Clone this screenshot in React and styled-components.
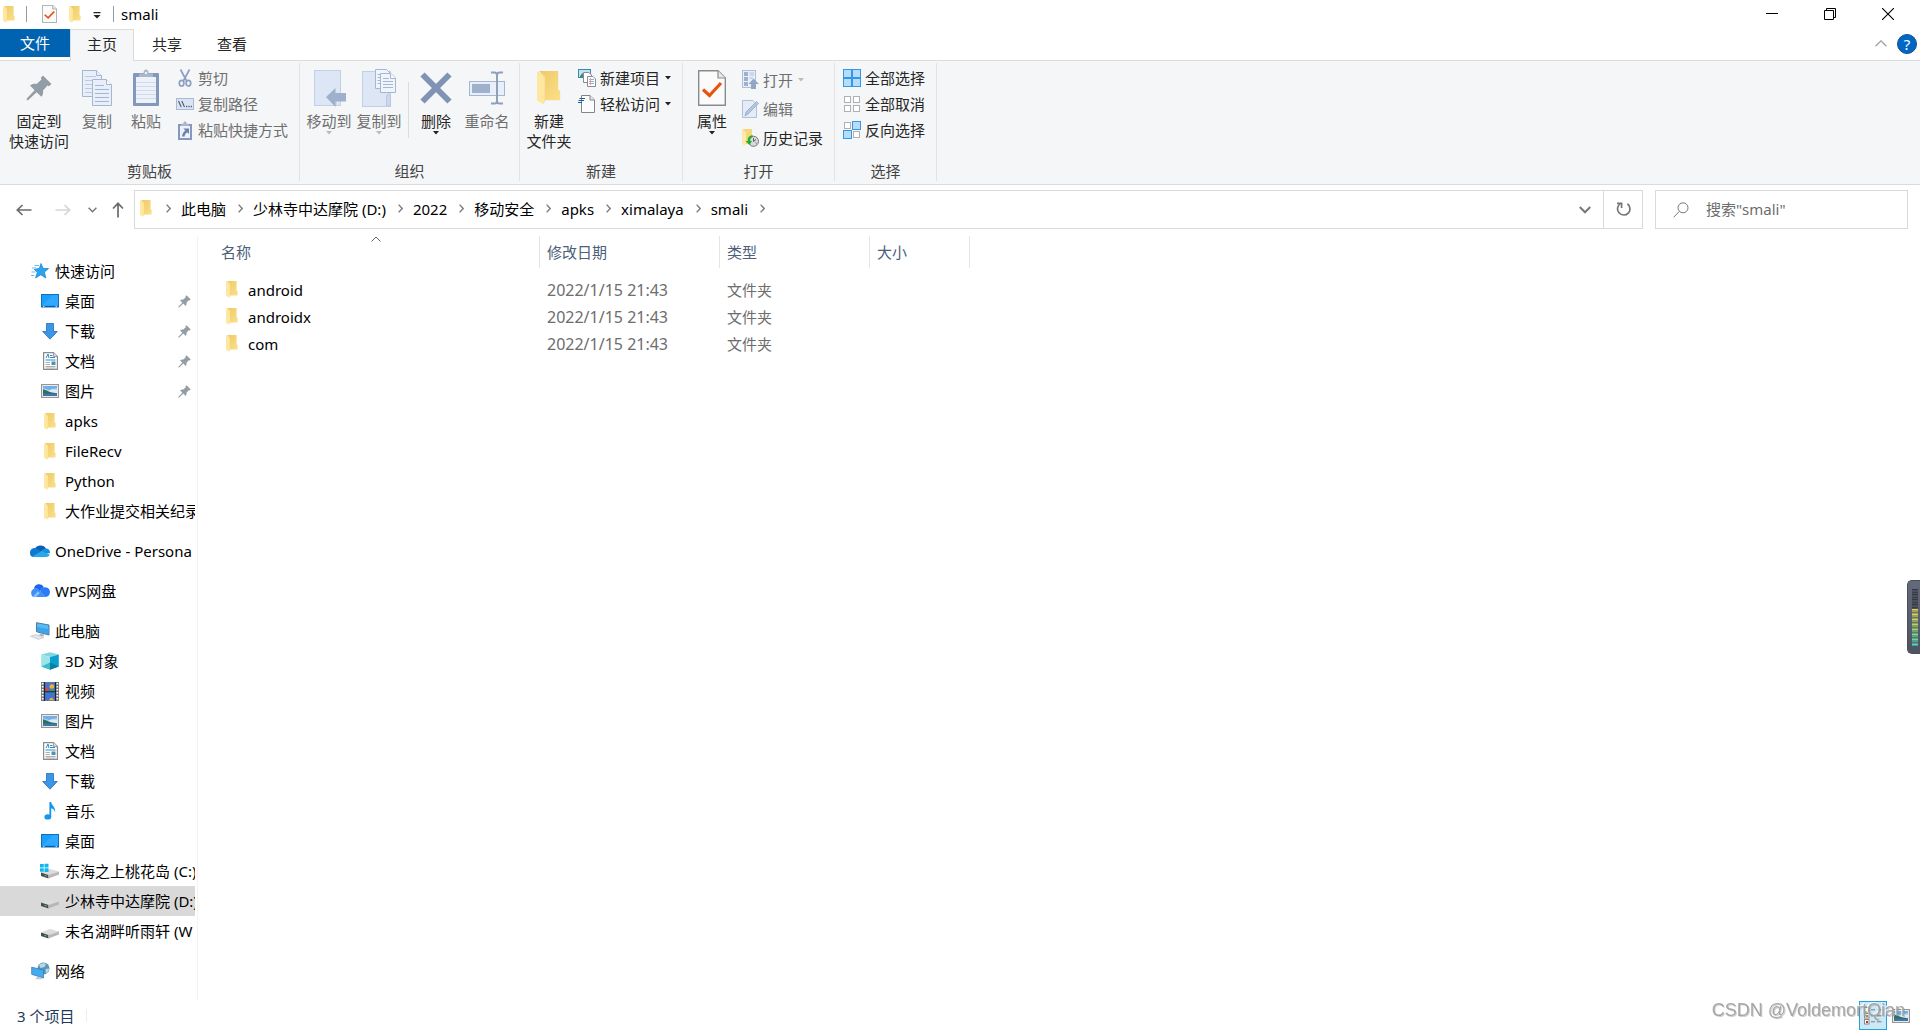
import React, { useState } from 'react';
import styled, { createGlobalStyle } from 'styled-components';

const GlobalStyle = createGlobalStyle`
  * {
    box-sizing: border-box;
  }

  body {
    margin: 0;
    background: #fff;
    color: #000;
    font-family: "Noto Sans", "Noto Sans CJK SC", sans-serif;
    font-size: 15px;
    line-height: 20px;
  }

  button, input {
    font: inherit;
    color: inherit;
  }

  button {
    border: none;
    background: none;
    padding: 0;
    white-space: nowrap;
  }

  svg {
    display: block;
    flex: none;
  }
`;

/* ---------- layout ---------- */

const Window = styled.div`
  display: flex;
  flex-direction: column;
  min-height: 100vh;
  overflow: hidden;
`;

const TitleBar = styled.header`
  display: flex;
  align-items: center;
  height: 29px;
  padding: 0 3px 1px;
`;

const QuickTools = styled.div`
  display: flex;
  align-items: center;
`;

const QuickButton = styled.button`
  display: flex;
  justify-content: center;
  width: ${props => props.$narrow ? '18px' : '26px'};
`;

const TitleDivider = styled.span`
  width: 1px;
  height: 16px;
  margin: 0 ${props => props.$after} 0 ${props => props.$before};
  background: #9b9b9b;
`;

const WindowTitle = styled.h1`
  margin: 0;
  font-size: 15px;
  font-weight: 400;
  line-height: 20px;
`;

const WindowControls = styled.div`
  display: flex;
  margin-left: auto;
`;

const ControlButton = styled.button`
  display: flex;
  align-items: center;
  justify-content: center;
  width: 58px;
  height: 28px;

  &:hover {
    background: #e5e5e5;
  }
`;

const TabBar = styled.nav`
  display: flex;
  height: 31px;
  padding-right: 3px;
`;

const FileTab = styled.button`
  width: 70px;
  height: 28px;
  background: #0063b1;
  color: #fff;
`;

const Tab = styled.button`
  height: 32px;
  margin-right: 1px;
  padding: 0 16px 3px;
  border: 1px solid ${props => props.$active ? '#dadbdc' : 'transparent'};
  border-bottom: none;
  background: ${props => props.$active ? '#f5f6f7' : 'transparent'};
  color: #262626;
  z-index: 1;
`;

const TabTools = styled.div`
  display: flex;
  align-items: center;
  gap: 10px;
  margin-left: auto;
  padding-bottom: 2px;
`;

const Ribbon = styled.section`
  display: flex;
  height: 125px;
  border-top: 1px solid #dadbdc;
  border-bottom: 1px solid #dadbdc;
  background: #f5f6f7;
`;

const Group = styled.div`
  display: flex;
  flex-direction: column;
  justify-content: space-between;
  margin: 2px 0 3px;
  padding: 0 4px;
  border-right: 1px solid #e2e3e4;
`;

const GroupContent = styled.div`
  display: flex;
`;

const GroupLabel = styled.div`
  color: #444;
  text-align: center;
`;

const InnerDivider = styled.span`
  width: 1px;
  height: 56px;
  margin: 19px 4px 0;
  background: #dcdddf;
`;

const BigButton = styled.button`
  display: flex;
  flex-direction: column;
  align-items: center;
  align-self: flex-start;
  width: ${props => props.$width || '50px'};
  margin-top: 6px;
  color: ${props => props.disabled ? '#6f6f6f' : '#262626'};
`;

const BigIcon = styled.span`
  display: flex;
  align-items: center;
  height: 38px;
  margin-bottom: 4px;
`;

const SmallColumn = styled.div`
  display: flex;
  flex-direction: column;
  padding: 2px 7px 0 3px;
`;

const SmallButton = styled.button`
  display: flex;
  align-items: center;
  height: ${props => props.$tall ? '29px' : '26px'};
  color: ${props => props.disabled ? '#6f6f6f' : '#262626'};
`;

const SmallIcon = styled.span`
  display: flex;
  justify-content: center;
  width: 20px;
  margin-right: 3px;
`;

const SmallArrow = styled.span`
  margin-left: 5px;
`;

const AddressRow = styled.div`
  display: flex;
  align-items: stretch;
  height: 51px;
  padding: 5px 12px 7px 4px;
`;

const NavButton = styled.button`
  display: flex;
  align-items: center;
  justify-content: center;
  width: ${props => props.$width};
`;

const AddressBox = styled.div`
  display: flex;
  flex: 1;
  align-items: stretch;
  min-width: 0;
  margin: 0 12px 0 2px;
  border: 1px solid #d9d9d9;
`;

const Breadcrumbs = styled.nav`
  display: flex;
  flex: 1;
  align-items: center;
  min-width: 0;
  padding: 0 0 2px 5px;
`;

const CrumbFolder = styled.span`
  width: 14px;
`;

const CrumbChevron = styled.span`
  margin: 0 10px 0 12px;
`;

const Crumb = styled.a`
  color: #000;
  text-decoration: none;
  white-space: nowrap;
`;

const RefreshButton = styled(NavButton)`
  border-left: 1px solid #d9d9d9;
`;

const SearchBox = styled.label`
  display: flex;
  align-items: center;
  width: 253px;
  padding-left: 17px;
  border: 1px solid #d9d9d9;
`;

const SearchInput = styled.input`
  flex: 1;
  min-width: 0;
  margin-left: 17px;
  padding: 0 0 2px;
  border: none;
  outline: none;
  background: none;

  &::placeholder {
    color: #6d6d6d;
    opacity: 1;
  }
`;

const Body = styled.main`
  display: flex;
  flex: 1;
`;

const Sidebar = styled.aside`
  width: 198px;
  padding: 20px 2px 5px 0;
  border-right: 1px solid #f3f3f3;
`;

const TreeSection = styled.div`
  margin-bottom: 10px;
`;

const TreeRow = styled.a`
  display: flex;
  align-items: center;
  height: 30px;
  padding-left: ${props => props.$child ? '40px' : '30px'};
  overflow: hidden;
  background: ${props => props.$selected ? '#d9d9d9' : 'transparent'};
  color: #000;
  text-decoration: none;
  white-space: nowrap;

  &:hover {
    background: ${props => props.$selected ? '#d9d9d9' : '#e5f3ff'};
  }
`;

const TreeIcon = styled.span`
  display: flex;
  flex: none;
  justify-content: center;
  width: 20px;
  margin-right: 5px;
`;

const TreeLabel = styled.span`
  flex: 1;
  overflow: hidden;
`;

const TreePin = styled.span`
  margin-right: 4px;
`;

const Content = styled.section`
  flex: 1;
  min-width: 0;
  padding-left: 14px;
`;

const FileTable = styled.table`
  width: 758px;
  table-layout: fixed;
  border-collapse: separate;
  border-spacing: 0;

  tbody::before {
    content: '';
    display: block;
    height: 8px;
  }
`;

const HeadCell = styled.th`
  position: relative;
  width: ${props => props.$width};
  height: 32px;
  padding: 0 0 0 ${props => props.$first ? '9px' : '7px'};
  border-right: 1px solid #e5e5e5;
  color: #4c607a;
  font-weight: 400;
  text-align: left;
`;

const SortMark = styled.span`
  position: absolute;
  top: 0;
  left: 50%;
  transform: translateX(-50%);
`;

const Cell = styled.td`
  height: 27px;
  padding: 0 0 0 7px;
  color: #6d6d6d;
`;

const NameCell = styled(Cell)`
  padding-left: 14px;
  color: #000;
`;

const DateCell = styled(Cell)`
  font-size: 16px;
`;

const FileName = styled.div`
  display: flex;
  align-items: center;
  gap: 10px;
`;

const StatusBar = styled.footer`
  display: flex;
  align-items: center;
  height: 29px;
  padding: 0 9px 0 17px;
  color: #1e395b;
`;

const StatusDivider = styled.span`
  width: 1px;
  height: 13px;
  margin-left: 12px;
  background: #ececec;
`;

const ViewSwitch = styled.div`
  display: flex;
  gap: 4px;
  margin-left: auto;
`;

const ViewButton = styled.button`
  display: flex;
  align-items: center;
  justify-content: center;
  width: ${props => props.$active ? '28px' : '20px'};
  height: 29px;
  border: 1px solid ${props => props.$active ? '#26a0da' : 'transparent'};
  background: ${props => props.$active ? '#cbe8f6' : 'transparent'};
`;

const Watermark = styled.div`
  position: fixed;
  right: 15px;
  bottom: 10px;
  color: rgba(160, 160, 160, 0.9);
  font-family: "Liberation Sans", sans-serif;
  font-size: 18px;
  text-shadow: 1px 1px 0 rgba(120, 120, 120, 0.35), -1px -1px 0 rgba(255, 255, 255, 0.8);
  pointer-events: none;
`;

const LevelMeter = styled.div`
  position: fixed;
  top: 580px;
  right: 0;
  width: 13px;
  height: 74px;
  padding: 8px 2px 8px 4px;
  border: 1px solid #4b4f5a;
  border-right: none;
  border-radius: 5px 0 0 5px;
  background: linear-gradient(#646a7b, #4d5360);
`;

/* ---------- icons ---------- */

const FolderIcon = ({ size = 12 }) => (
  <svg width={size} height={size / 12 * 17} viewBox="0 0 12 17">
    <defs>
      <linearGradient id="folderBack" x1="0" y1="0" x2="1" y2="1">
        <stop offset="0" stopColor="#edc965" />
        <stop offset="1" stopColor="#fbe08a" />
      </linearGradient>
    </defs>
    <path d="M1 0H10.6V9.4L11.6 10V14.6H3V2Z" fill="url(#folderBack)" />
    <path d="M0 0.4L4 2.8V14.4L3.2 16.8L0 14.8Z" fill="#ffe7a0" />
    <path d="M0.2 0.5L4 2.8V14.4L3.6 15.6" fill="none" stroke="#f3d88a" strokeWidth="0.4" />
  </svg>
);

const PropertiesIcon = ({ width = 15, height = 18 }) => (
  <svg width={width} height={height} viewBox="0 0 28 36" preserveAspectRatio="none">
    <path d="M0.7 0.7H20L27.3 8V35.3H0.7Z" fill="#fbfbfb" stroke="#8b8b8b" strokeWidth="1.4" />
    <path d="M20 0.7V8H27.3" fill="#e8e8e8" stroke="#8b8b8b" strokeWidth="1.2" />
    <path d="M5 19.5L11.5 25.5L23 13" fill="none" stroke="#e8530e" strokeWidth="3.2" />
  </svg>
);

const CustomizeIcon = () => (
  <svg width="8" height="9" viewBox="0 0 8 9">
    <path d="M0.5 2H7.5V3.2H0.5Z M0.5 5H7.5L4 8.5Z" fill="#222" />
  </svg>
);

const MinimizeIcon = () => (
  <svg width="12" height="12" viewBox="0 0 12 12">
    <path d="M0 5.5H12" stroke="#000" />
  </svg>
);

const RestoreIcon = () => (
  <svg width="12" height="12" viewBox="0 0 12 12" fill="none" stroke="#000">
    <path d="M0.5 2.5H9.5V11.5H0.5Z M2.5 2.5V0.5H11.5V9.5H9.5" />
  </svg>
);

const CloseIcon = () => (
  <svg width="12" height="12" viewBox="0 0 12 12">
    <path d="M0 0L12 12M12 0L0 12" stroke="#000" strokeWidth="1.1" />
  </svg>
);

const CollapseIcon = () => (
  <svg width="12" height="7" viewBox="0 0 12 7">
    <path d="M0.5 6.3L6 0.9L11.5 6.3" fill="none" stroke="#a0a0a0" strokeWidth="1.3" />
  </svg>
);

const HelpBadge = styled.button`
  display: flex;
  align-items: center;
  justify-content: center;
  width: 20px;
  height: 20px;
  border: 1px solid #1a4f85;
  border-radius: 50%;
  background: #0067c5;
  color: #fff;
  font-size: 15px;
  line-height: 18px;
`;

const DownArrow = ({ muted }) => (
  <svg width="6" height="4" viewBox="0 0 6 4">
    <path d="M0 0H6L3 3.4Z" fill={muted ? '#b9bcc0' : '#222'} />
  </svg>
);

const PinIcon = ({ size = 13 }) => (
  <svg width={size} height={size} viewBox="0 0 26 26">
    <path
      d="M17 0.5L25.5 9L23 11.2L21.4 10.6L17 15.5C17.4 18 17 20 15.4 21.8L10.6 17.2L1.8 25.5L0.3 24L8.6 15.3L4 10.6C6 8.9 8.2 8.6 10.6 9L15.5 4.6L14.8 2.8Z"
      fill="#939da5"
    />
  </svg>
);

const CopyIcon = () => (
  <svg width="30" height="36" viewBox="0 0 30 36" fill="#e9effa" stroke="#a5b6d1">
    <path d="M0.5 0.5H14.5L19.5 5.5V26.5H0.5Z" />
    <path d="M3 6.5H14M3 10.5H14M3 14.5H14M3 18.5H14M3 22.5H14" stroke="#bccae0" />
    <path d="M14.5 0.5V5.5H19.5" />
    <path d="M10.5 9.5H24.5L29.5 14.5V35.5H10.5Z" />
    <path d="M24.5 9.5V14.5H29.5" fill="#fff" />
    <path d="M13 15.5H22M13 19.5H27M13 23.5H27M13 27.5H27M13 31.5H27" stroke="#a5b6d1" />
  </svg>
);

const PasteIcon = () => (
  <svg width="26" height="38" viewBox="0 0 26 38">
    <rect y="4" width="26" height="33" rx="1" fill="#8497bd" />
    <rect x="3" y="8" width="20" height="26" fill="#ecf1fa" />
    <path d="M3 13.5H23M3 17.5H23M3 21.5H23M3 25.5H23M3 29.5H23" stroke="#d0daeb" />
    <path d="M6 8V4.5H10.5C10.5 1.5 11.5 0.5 13 0.5S15.5 1.5 15.5 4.5H20V8Z" fill="#a9b6cb" />
    <circle cx="13" cy="4" r="1.2" fill="#eef2f8" />
  </svg>
);

const ScissorsIcon = () => (
  <svg width="14" height="18" viewBox="0 0 14 18" fill="none" stroke="#8d9fc0">
    <path d="M2.5 0.5L8.7 12M11.5 0.5L5.3 12" strokeWidth="1.7" />
    <ellipse cx="3.6" cy="14.2" rx="2.3" ry="2.8" strokeWidth="1.7" />
    <ellipse cx="10.4" cy="14.2" rx="2.3" ry="2.8" strokeWidth="1.7" />
  </svg>
);

const CopyPathIcon = () => (
  <svg width="18" height="12" viewBox="0 0 18 12">
    <rect x="0.5" y="0.5" width="17" height="11" fill="#dbe4f2" stroke="#a9b9d3" />
    <path d="M2.5 3L5.2 9M5.8 3L8.5 9" stroke="#4d5b78" strokeWidth="1.1" />
    <path d="M10 8.5h1.2M12.4 8.5h1.2M14.8 8.5h1.2" stroke="#4d5b78" strokeWidth="1.3" />
  </svg>
);

const PasteShortcutIcon = () => (
  <svg width="14" height="19" viewBox="0 0 14 19">
    <rect y="3" width="14" height="16" fill="#8699bd" />
    <rect x="2" y="5" width="10" height="12" fill="#edf2fa" />
    <path d="M3 5V2.8H5.4C5.4 1 6 0.4 7 0.4S8.6 1 8.6 2.8H11V5Z" fill="#a9b6cb" />
    <path d="M5.4 7.5H11V13L9.2 11.2C7.6 12.4 6.8 13.6 6.6 15.4H4C4.2 12.8 5.3 11 7.3 9.4Z" fill="#6c82ad" />
  </svg>
);

const MoveToIcon = () => (
  <svg width="34" height="38" viewBox="-2 -1 34 38">
    <rect x="0.5" y="0.5" width="26" height="35" fill="#dce6f4" stroke="#c2d0e5" />
    <path d="M22 25V36" stroke="#c2d0e5" />
    <path d="M12 27L21.5 18V23H32V31.5H21.5V37Z" fill="#9fb0cc" />
  </svg>
);

const CopyToIcon = () => (
  <svg width="34" height="38" viewBox="0 0 34 38">
    <rect x="0.5" y="2.5" width="28" height="35" fill="#dce6f4" stroke="#c2d0e5" />
    <path d="M24.5 37V27L26.5 24.5L28.5 27V37Z" fill="#cbd8ea" stroke="#b9c8df" />
    <g fill="#f0f4fb" stroke="#a5b6d1">
      <path d="M13.5 0.5H24.5L28.5 4.5V19.5H13.5Z" />
      <path d="M15.5 5.5H19M15.5 8.5H19M15.5 11.5H19M15.5 14.5H19" />
      <path d="M18.5 4.5H29L33.5 9V23.5H18.5Z" />
      <path d="M28.5 4.5V9.5H33.5" fill="#fff" />
      <path d="M21 9.5H27M21 12.5H31M21 15.5H31M21 18.5H31" />
    </g>
  </svg>
);

const DeleteIcon = () => (
  <svg width="32" height="32" viewBox="0 0 32 32">
    <path d="M2.5 2.5L29.5 29.5M29.5 2.5L2.5 29.5" stroke="#8093b5" strokeWidth="6" />
  </svg>
);

const RenameIcon = () => (
  <svg width="36" height="34" viewBox="0 0 36 34">
    <rect x="0.5" y="10.5" width="35" height="14" fill="#e9effa" stroke="#a5b6d1" />
    <rect x="3" y="13" width="18" height="9" fill="#9fb0cc" />
    <path
      d="M22 1.5H25.5Q28 1.5 28 4Q28 1.5 30.5 1.5H34M28 3V31M22 32.5H25.5Q28 32.5 28 30Q28 32.5 30.5 32.5H34"
      fill="none"
      stroke="#8fa0bf"
      strokeWidth="2"
    />
  </svg>
);

const NewItemIcon = () => (
  <svg width="18" height="18" viewBox="0 0 18 18">
    <rect x="0.5" y="0.5" width="12" height="8" fill="#bfe3f5" stroke="#3b87b0" />
    <path d="M2 7L4.5 4L6 5.5L9 3V8H2Z" fill="#3e8c6a" />
    <path d="M5.5 3.5H11L13.5 6V13.5H5.5Z" fill="#fff" stroke="#8b8b8b" />
    <path d="M9.5 7.5H15L17.5 10V17.5H9.5Z" fill="#fff" stroke="#8b8b8b" />
    <path d="M11 10.5H16M11 12.5H16M11 14.5H16" stroke="#8bb4dd" />
    <path d="M12.5 9V16" stroke="#e59a9a" />
  </svg>
);

const EasyAccessIcon = () => (
  <svg width="18" height="18" viewBox="0 0 18 18">
    <path d="M3.5 0.5H12L16.5 5V17.5H3.5Z" fill="#fcfcfc" stroke="#858585" />
    <path d="M12 0.5V5H16.5" fill="#e9e9e9" stroke="#858585" />
    <path d="M1.5 3.5H7M0.5 5.5H6M0 7.5H4" stroke="#1464a5" strokeWidth="1.2" />
  </svg>
);

const OpenIcon = () => (
  <svg width="17" height="19" viewBox="0 0 17 19">
    <rect x="0.5" y="0.5" width="13" height="17" fill="#e9effa" stroke="#b0bfd8" />
    <path d="M2 2H6V6H2ZM2 7H6V11H2ZM2 12H6V16H2Z" fill="#a0b1ce" />
    <path d="M7.5 3H12M7.5 5H12M7.5 8H11" stroke="#b0bfd8" />
    <path d="M11.5 8.5L17 14H14V19H9V14H6.5Z" fill="#93a5c5" />
  </svg>
);

const EditIcon = () => (
  <svg width="17" height="18" viewBox="0 0 17 18">
    <path d="M0.5 0.5H11L14.5 4V17.5H0.5Z" fill="#e4ecf8" stroke="#b0bfd8" />
    <path d="M3 16L4 12L14.5 1.5L16.5 3.5L6 14Z" fill="#b6c5dd" stroke="#96a9c9" strokeWidth="0.8" />
  </svg>
);

const HistoryIcon = () => (
  <svg width="17" height="18" viewBox="0 0 17 18">
    <path d="M1 0H10V15H3Z" fill="#f5d679" />
    <path d="M0 0.5L4 3V14.5L3 17L0 15Z" fill="#ffe9a8" />
    <circle cx="11.5" cy="12.3" r="5" fill="#d9dcdc" stroke="#777" />
    <path d="M11.5 9V12.5L14 10.5M8 12.5h1M14.5 14.5l-1-0.8" fill="none" stroke="#555" strokeWidth="0.9" />
    <path d="M10.5 6C6.5 7 5.5 9 5.8 12H3.5L7.5 16L10 12H8.3C8.2 10 8.8 8.8 10.8 8Z" fill="#22ac38" />
  </svg>
);

const Squares = ({ filled }) => (
  <svg width="18" height="18" viewBox="0 0 18 18">
    {[[0, 0], [9, 0], [0, 9], [9, 9]].map(([x, y], i) => (
      filled[i]
        ? <rect key={i} x={x + 0.5} y={y + 0.5} width="8" height="8" fill="#b5ddfa" stroke="#3397e8" />
        : <rect key={i} x={x + 1.5} y={y + 1.5} width="6" height="6" fill="#fff" stroke="#b0b0b0" />
    ))}
  </svg>
);

const ArrowIcon = ({ color, turn = 0 }) => (
  <svg width="16" height="16" viewBox="0 0 16 16">
    <path
      d="M15.5 8H1.5M6.5 3L1.3 8L6.5 13"
      fill="none"
      stroke={color}
      strokeWidth="1.7"
      transform={`rotate(${turn} 8 8)`}
    />
  </svg>
);

const ChevronDown = ({ width = 9 }) => (
  <svg width={width} height={width * 2 / 3} viewBox="0 0 9 6">
    <path d="M0.6 0.8L4.5 4.7L8.4 0.8" fill="none" stroke="#777" strokeWidth="1.5" />
  </svg>
);

const ChevronRight = () => (
  <svg width="5" height="9" viewBox="0 0 5 9">
    <path d="M0.6 0.6L4.2 4.5L0.6 8.4" fill="none" stroke="#7c7c7c" strokeWidth="1.4" />
  </svg>
);

const RefreshIcon = () => (
  <svg width="15" height="15" viewBox="0 0 15 15" fill="none" stroke="#777" strokeWidth="1.7">
    <path d="M11.4 1.8A6.2 6.2 0 1 1 4.4 1.6" />
    <path d="M1 1.3H5.6V6" />
  </svg>
);

const SearchIcon = () => (
  <svg width="16" height="16" viewBox="0 0 16 16" fill="none" stroke="#777">
    <circle cx="10" cy="5.8" r="5" />
    <path d="M6.4 9.4L0.5 15.3" />
  </svg>
);

const SortUpIcon = () => (
  <svg width="10" height="6" viewBox="0 0 10 6">
    <path d="M0.5 5.5L5 1L9.5 5.5" fill="none" stroke="#666" />
  </svg>
);

const StarIcon = () => (
  <svg width="18" height="16" viewBox="0 0 18 16">
    <path d="M10 0.5L12 5.3L17.6 5.6L13.4 9.1L14.8 15L9.8 11.8L4.6 15L6.3 9.3L3.3 6.5L8.4 5.3Z" fill="#2ba3f0" stroke="#1580cf" strokeWidth="0.7" />
    <path d="M3.5 2.5H8M1 5H5M0.5 9H4.5M0 12.5H3.5" stroke="#5cb6ee" strokeWidth="0.9" />
  </svg>
);

const DesktopIcon = () => (
  <svg width="18" height="14" viewBox="0 0 18 14">
    <rect x="0.5" y="0.5" width="17" height="12.5" fill="#1a9fff" stroke="#0f6fb8" />
    <path d="M1 11.5L12 1H17V11.5Z" fill="#3db0ff" opacity="0.6" />
    <path d="M1 12.4H17" stroke="#0b5d9f" />
    <path d="M2 12.4H3.5M14.5 12.4H16" stroke="#fff" strokeWidth="0.8" />
  </svg>
);

const DownloadIcon = () => (
  <svg width="16" height="17" viewBox="0 0 16 17">
    <path d="M4.5 0.5H11.5V8.5H15.3L8 16.2L0.7 8.5H4.5Z" fill="#3c96e6" stroke="#2b78c2" strokeWidth="0.9" />
  </svg>
);

const DocumentIcon = () => (
  <svg width="15" height="18" viewBox="0 0 15 18">
    <path d="M0.6 0.6H10.5L14.4 4.5V17.4H0.6Z" fill="#fff" stroke="#8b8b8b" strokeWidth="1.2" />
    <path d="M10.5 0.6V4.5H14.4" fill="#ddd" stroke="#8b8b8b" strokeWidth="0.8" />
    <path d="M3 6L5 2L6 6M7 3.5H9.5M7 5.5H12M2.5 8H12.5" stroke="#2a8cd0" fill="none" />
    <path d="M2.5 10.5H7M2.5 12.5H7M2.5 14.5H12.5M2.5 16H12.5" stroke="#999" strokeWidth="0.8" />
    <rect x="8.5" y="9.5" width="4" height="3.5" fill="#4b93b5" />
  </svg>
);

const PictureIcon = () => (
  <svg width="18" height="14" viewBox="0 0 18 14">
    <rect x="0.6" y="0.6" width="16.8" height="12.8" fill="#fff" stroke="#969696" strokeWidth="1.2" />
    <rect x="2" y="2" width="14" height="10" fill="#a8d3f5" />
    <path d="M2 2H16V4L8 6L2 4Z" fill="#5d9fe0" opacity="0.7" />
    <path d="M7 7L11 5.2L16 6V9H7Z" fill="#dcebf4" />
    <path d="M2 5.2C5 6 7 7.6 11 8.5L16 9.3V10H2Z" fill="#2f6e63" />
    <path d="M2 9.6H16V12H2Z" fill="#3f78a6" />
  </svg>
);

const OneDriveIcon = () => (
  <svg width="20" height="14" viewBox="0 0 20 14">
    <path d="M5 4.5A6.2 5.6 0 0 1 16 4.6L10 8Z" fill="#0a5fb3" />
    <path d="M0 9A4.6 4.6 0 0 1 6 4.2L13 8.2L6 13H3.8A4 4 0 0 1 0 9Z" fill="#0f78d4" />
    <path d="M11.5 7.4A5 5 0 0 1 16 4.6A4.3 4.3 0 0 1 20 9L15 10Z" fill="#1490df" />
    <path d="M2.2 12.6L11.6 7.3L19.8 10.5A3.6 3.6 0 0 1 16.6 13H4Q3 13 2.2 12.6Z" fill="#28a8ea" />
  </svg>
);

const WpsIcon = () => (
  <svg width="19" height="14" viewBox="0 0 19 14">
    <path d="M3 4.8A5.2 5.2 0 0 1 12.8 3Q9.8 4.2 9 7.4L6.4 4.8Z" fill="#1b66f0" />
    <path d="M0.2 9.4A4.3 4.3 0 0 1 7.4 5.6L14.4 13H4A3.8 3.8 0 0 1 0.2 9.4Z" fill="#3f8ffa" />
    <path d="M9.2 7.4A4.9 4.9 0 1 1 14.4 13Z" fill="#2b7bf6" />
    <path d="M2 12.6L7 7.2L8.8 9L5 13Z" fill="#8fc0ff" />
  </svg>
);

const ComputerIcon = () => (
  <svg width="20" height="18" viewBox="0 0 20 18">
    <path d="M6.5 0.7L19 3V13L6.5 9.7Z" fill="#5ab8f5" stroke="#3f6f92" strokeWidth="0.9" />
    <path d="M7 5L18.5 7V12.4L7 9.3Z" fill="#2f9be6" opacity="0.7" />
    <path d="M10 11.5L14 12.5L13.5 14.5L9 13.5Z" fill="#aab3bb" />
    <path d="M0.5 14.2L6 12.6L14 15.4L8.5 17.4Z" fill="#e3e6ea" stroke="#b9bec4" strokeWidth="0.6" />
  </svg>
);

const CubeIcon = () => (
  <svg width="18" height="18" viewBox="0 0 18 18">
    <path d="M9 0.3L17.8 2.6L9 5L0.2 2.6Z" fill="#7fd6dc" />
    <path d="M0.2 2.6L9 5V17.8L0.2 14.4Z" fill="#9ce4e8" />
    <path d="M9 5L17.8 2.6V14.4L9 17.8Z" fill="#0a9fd0" />
    <path d="M0.2 14.4L9 10.5V17.8Z" fill="#3bbcc8" />
    <path d="M17.8 14.4L9 10.5V17.8Z" fill="#0a7f9c" />
  </svg>
);

const VideoIcon = () => (
  <svg width="18" height="19" viewBox="0 0 18 19">
    <rect width="18" height="19" fill="#777" />
    <path d="M1.7 1V18M16.3 1V18" stroke="#fff" strokeWidth="1.7" strokeDasharray="1.6 1.4" />
    <rect x="3.5" y="0.7" width="11" height="8.5" fill="#3f74d6" />
    <rect x="3.5" y="10.2" width="11" height="8" fill="#3f74d6" />
    <circle cx="10.8" cy="4.6" r="2.4" fill="#e7b630" />
    <circle cx="6" cy="7" r="1.8" fill="#d6493b" />
    <circle cx="11" cy="8" r="1.5" fill="#3ca24d" />
    <path d="M8 18.2Q10 13.5 13 18.2Z" fill="#e7b630" />
    <path d="M3.5 0V19M14.5 0V19M3.5 9.7H14.5" stroke="#222" strokeWidth="1.1" />
  </svg>
);

const MusicIcon = () => (
  <svg width="12" height="18" viewBox="0 0 12 18">
    <ellipse cx="3.8" cy="14.9" rx="3.4" ry="2.7" fill="#1596ea" />
    <path d="M5.4 0H7.2C7.4 3.5 11.6 4.6 11.2 10.5C10.4 8 9.2 6.8 7.2 6.3V15H5.4Z" fill="#1596ea" />
  </svg>
);

const DriveIcon = ({ system }) => (
  <svg width="20" height="16" viewBox="0 0 20 16">
    <path d="M1 9.5L10 6L19 8.5L8.5 12Z" fill="#dcdcdc" />
    <path d="M1 9.5L8.5 12V15.5L1 13Z" fill="#4a4d4b" />
    <path d="M8.5 12L19 8.5V11.5L8.5 15.5Z" fill="#b8b8b8" />
    <path d="M4.5 12.3L6.5 13" stroke="#65d26e" />
    {system && <path d="M0 1H3.8V4.5H0ZM4.5 0.8H8.5V4.5H4.5ZM0 5.2H3.8V8.7H0ZM4.5 5.2H8.5V8.9H4.5Z" fill="#12b7f0" />}
  </svg>
);

const NetworkIcon = () => (
  <svg width="19" height="18" viewBox="0 0 19 18">
    <circle cx="12.5" cy="6.5" r="6" fill="#5796b8" />
    <path d="M8 3Q12 0 15 2L13.5 5L9.5 6ZM14.5 7L18 6.5Q18 10 15 11.5Z" fill="#b8d9e4" />
    <path d="M0.7 5.2L12.5 8V16L0.7 12.3Z" fill="#43abf2" stroke="#3c7ba7" strokeWidth="0.8" />
    <path d="M6 14.5L10 15.7L12 17.2H4.5Z" fill="#c3c8cc" />
  </svg>
);

const DetailsViewIcon = () => (
  <svg width="18" height="18" viewBox="0 0 18 18">
    {[0, 6, 12].map(y => (
      <g key={y}>
        <rect x="0.5" y={y + 0.5} width="4.5" height="4.5" fill="#fff" stroke="#8a8a8a" />
        <path d={`M7 ${y + 2.8}h4M13 ${y + 2.8}h4.5`} stroke="#6f7f89" />
      </g>
    ))}
    <rect x="2" y="8" width="2" height="2" fill="#c48a20" />
    <rect x="2" y="14" width="2" height="2" fill="#c3362b" />
  </svg>
);

const MeterBars = () => (
  <svg width="6" height="57" viewBox="0 0 6 57">
    <defs>
      <linearGradient id="meterLevel" gradientUnits="userSpaceOnUse" x1="0" y1="20" x2="0" y2="57">
        <stop offset="0" stopColor="#e6d545" />
        <stop offset="0.4" stopColor="#b5d75c" />
        <stop offset="1" stopColor="#3fdcc0" />
      </linearGradient>
    </defs>
    <rect width="6" height="20" fill="#4b505e" />
    <rect y="20" width="6" height="37" fill="url(#meterLevel)" opacity="0.55" />
    {Array.from({ length: 12 }, (_, i) => (
      <rect key={i} y={i * 5} width="6" height="1" fill={i < 4 ? '#343844' : 'url(#meterLevel)'} />
    ))}
    {Array.from({ length: 11 }, (_, i) => (
      <rect key={i} y={i * 5 + 3} width="6" height="1" fill={i < 4 ? '#343844' : '#5b6560'} opacity="0.7" />
    ))}
  </svg>
);

/* ---------- data ---------- */

const tabs = ['主页', '共享', '查看'];

const crumbs = ['此电脑', '少林寺中达摩院 (D:)', '2022', '移动安全', 'apks', 'ximalaya', 'smali'];

const tree = [
  {
    label: '快速访问',
    icon: <StarIcon />,
    children: [
      { label: '桌面', icon: <DesktopIcon />, pinned: true },
      { label: '下载', icon: <DownloadIcon />, pinned: true },
      { label: '文档', icon: <DocumentIcon />, pinned: true },
      { label: '图片', icon: <PictureIcon />, pinned: true },
      { label: 'apks', icon: <FolderIcon /> },
      { label: 'FileRecv', icon: <FolderIcon /> },
      { label: 'Python', icon: <FolderIcon /> },
      { label: '大作业提交相关纪录', icon: <FolderIcon /> },
    ],
  },
  { label: 'OneDrive - Persona', icon: <OneDriveIcon />, children: [] },
  { label: 'WPS网盘', icon: <WpsIcon />, children: [] },
  {
    label: '此电脑',
    icon: <ComputerIcon />,
    children: [
      { label: '3D 对象', icon: <CubeIcon /> },
      { label: '视频', icon: <VideoIcon /> },
      { label: '图片', icon: <PictureIcon /> },
      { label: '文档', icon: <DocumentIcon /> },
      { label: '下载', icon: <DownloadIcon /> },
      { label: '音乐', icon: <MusicIcon /> },
      { label: '桌面', icon: <DesktopIcon /> },
      { label: '东海之上桃花岛 (C:)', icon: <DriveIcon system /> },
      { label: '少林寺中达摩院 (D:)', icon: <DriveIcon />, selected: true },
      { label: '未名湖畔听雨轩 (W', icon: <DriveIcon /> },
    ],
  },
  { label: '网络', icon: <NetworkIcon />, children: [] },
];

const files = [
  { name: 'android', date: '2022/1/15 21:43', type: '文件夹' },
  { name: 'androidx', date: '2022/1/15 21:43', type: '文件夹' },
  { name: 'com', date: '2022/1/15 21:43', type: '文件夹' },
];

/* ---------- components ---------- */

const Big = ({ icon, label, label2, arrow, width, disabled }) => (
  <BigButton $width={width} disabled={disabled}>
    <BigIcon>{icon}</BigIcon>
    <span>{label}</span>
    {label2 && <span>{label2}</span>}
    {arrow && <DownArrow muted={disabled} />}
  </BigButton>
);

const Small = ({ icon, label, arrow, tall, disabled }) => (
  <SmallButton $tall={tall} disabled={disabled}>
    <SmallIcon>{icon}</SmallIcon>
    <span>{label}</span>
    {arrow && <SmallArrow><DownArrow muted={disabled} /></SmallArrow>}
  </SmallButton>
);

const TreeItem = ({ item, child }) => (
  <TreeRow href="#" $child={child} $selected={item.selected}>
    <TreeIcon>{item.icon}</TreeIcon>
    <TreeLabel>{item.label}</TreeLabel>
    {item.pinned && <TreePin><PinIcon /></TreePin>}
  </TreeRow>
);

function RibbonPanel() {
  return (
    <Ribbon>
      <Group>
        <GroupContent>
          <Big width="70px" icon={<PinIcon size={26} />} label="固定到" label2="快速访问" />
          <Big width="46px" icon={<CopyIcon />} label="复制" disabled />
          <Big width="52px" icon={<PasteIcon />} label="粘贴" disabled />
          <SmallColumn>
            <Small icon={<ScissorsIcon />} label="剪切" disabled />
            <Small icon={<CopyPathIcon />} label="复制路径" disabled />
            <Small icon={<PasteShortcutIcon />} label="粘贴快捷方式" disabled />
          </SmallColumn>
        </GroupContent>
        <GroupLabel>剪贴板</GroupLabel>
      </Group>
      <Group>
        <GroupContent>
          <Big icon={<MoveToIcon />} label="移动到" arrow disabled />
          <Big icon={<CopyToIcon />} label="复制到" arrow disabled />
          <InnerDivider />
          <Big width="46px" icon={<DeleteIcon />} label="删除" arrow />
          <Big width="56px" icon={<RenameIcon />} label="重命名" disabled />
        </GroupContent>
        <GroupLabel>组织</GroupLabel>
      </Group>
      <Group>
        <GroupContent>
          <Big icon={<FolderIcon size={24} />} label="新建" label2="文件夹" />
          <SmallColumn>
            <Small icon={<NewItemIcon />} label="新建项目" arrow />
            <Small icon={<EasyAccessIcon />} label="轻松访问" arrow />
          </SmallColumn>
        </GroupContent>
        <GroupLabel>新建</GroupLabel>
      </Group>
      <Group>
        <GroupContent>
          <Big icon={<PropertiesIcon width={28} height={36} />} label="属性" arrow />
          <SmallColumn>
            <Small icon={<OpenIcon />} label="打开" arrow tall disabled />
            <Small icon={<EditIcon />} label="编辑" tall disabled />
            <Small icon={<HistoryIcon />} label="历史记录" tall />
          </SmallColumn>
        </GroupContent>
        <GroupLabel>打开</GroupLabel>
      </Group>
      <Group>
        <GroupContent>
          <SmallColumn>
            <Small icon={<Squares filled={[1, 1, 1, 1]} />} label="全部选择" />
            <Small icon={<Squares filled={[0, 0, 0, 0]} />} label="全部取消" />
            <Small icon={<Squares filled={[0, 1, 1, 0]} />} label="反向选择" />
          </SmallColumn>
        </GroupContent>
        <GroupLabel>选择</GroupLabel>
      </Group>
    </Ribbon>
  );
}

function App() {
  const [activeTab, setActiveTab] = useState('主页');
  const [query, setQuery] = useState('');

  return (
    <Window>
      <GlobalStyle />
      <TitleBar>
        <FolderIcon />
        <TitleDivider $before="11px" $after="9px" />
        <QuickTools>
          <QuickButton aria-label="属性"><PropertiesIcon /></QuickButton>
          <QuickButton aria-label="新建文件夹"><FolderIcon /></QuickButton>
          <QuickButton $narrow aria-label="自定义"><CustomizeIcon /></QuickButton>
        </QuickTools>
        <TitleDivider $before="7px" $after="7px" />
        <WindowTitle>smali</WindowTitle>
        <WindowControls>
          <ControlButton aria-label="最小化"><MinimizeIcon /></ControlButton>
          <ControlButton aria-label="还原"><RestoreIcon /></ControlButton>
          <ControlButton aria-label="关闭"><CloseIcon /></ControlButton>
        </WindowControls>
      </TitleBar>

      <TabBar>
        <FileTab>文件</FileTab>
        {tabs.map(tab => (
          <Tab key={tab} $active={activeTab === tab} onClick={() => setActiveTab(tab)}>
            {tab}
          </Tab>
        ))}
        <TabTools>
          <CollapseIcon />
          <HelpBadge aria-label="帮助">?</HelpBadge>
        </TabTools>
      </TabBar>

      <RibbonPanel />

      <AddressRow>
        <NavButton $width="39px" aria-label="后退"><ArrowIcon color="#6b6b6b" /></NavButton>
        <NavButton $width="39px" aria-label="前进" disabled><ArrowIcon color="#d6d6d6" turn={180} /></NavButton>
        <NavButton $width="21px" aria-label="最近位置"><ChevronDown /></NavButton>
        <NavButton $width="29px" aria-label="上移"><ArrowIcon color="#6b6b6b" turn={90} /></NavButton>
        <AddressBox>
          <Breadcrumbs>
            <CrumbFolder><FolderIcon /></CrumbFolder>
            {crumbs.map(crumb => (
              <React.Fragment key={crumb}>
                <CrumbChevron><ChevronRight /></CrumbChevron>
                <Crumb href="#">{crumb}</Crumb>
              </React.Fragment>
            ))}
            <CrumbChevron><ChevronRight /></CrumbChevron>
          </Breadcrumbs>
          <NavButton $width="36px" aria-label="历史位置"><ChevronDown width={12} /></NavButton>
          <RefreshButton $width="39px" aria-label="刷新"><RefreshIcon /></RefreshButton>
        </AddressBox>
        <SearchBox>
          <SearchIcon />
          <SearchInput
            type="text"
            aria-label="搜索"
            placeholder={'搜索"smali"'}
            value={query}
            onChange={e => setQuery(e.target.value)}
          />
        </SearchBox>
      </AddressRow>

      <Body>
        <Sidebar>
          {tree.map(section => (
            <TreeSection key={section.label}>
              <TreeItem item={section} />
              {section.children.map(item => (
                <TreeItem key={item.label} item={item} child />
              ))}
            </TreeSection>
          ))}
        </Sidebar>
        <Content>
          <FileTable>
            <thead>
              <tr>
                <HeadCell $width="328px" $first>
                  名称
                  <SortMark><SortUpIcon /></SortMark>
                </HeadCell>
                <HeadCell $width="180px">修改日期</HeadCell>
                <HeadCell $width="150px">类型</HeadCell>
                <HeadCell $width="100px">大小</HeadCell>
              </tr>
            </thead>
            <tbody>
              {files.map(file => (
                <tr key={file.name}>
                  <NameCell>
                    <FileName><FolderIcon />{file.name}</FileName>
                  </NameCell>
                  <DateCell>{file.date}</DateCell>
                  <Cell>{file.type}</Cell>
                  <Cell />
                </tr>
              ))}
            </tbody>
          </FileTable>
        </Content>
      </Body>

      <StatusBar>
        <span>3 个项目</span>
        <StatusDivider />
        <ViewSwitch>
          <ViewButton $active aria-label="详细信息"><DetailsViewIcon /></ViewButton>
          <ViewButton aria-label="缩略图"><PictureIcon /></ViewButton>
        </ViewSwitch>
      </StatusBar>

      <LevelMeter><MeterBars /></LevelMeter>
      <Watermark>CSDN @VoldemortQian</Watermark>
    </Window>
  );
}

export default App;
